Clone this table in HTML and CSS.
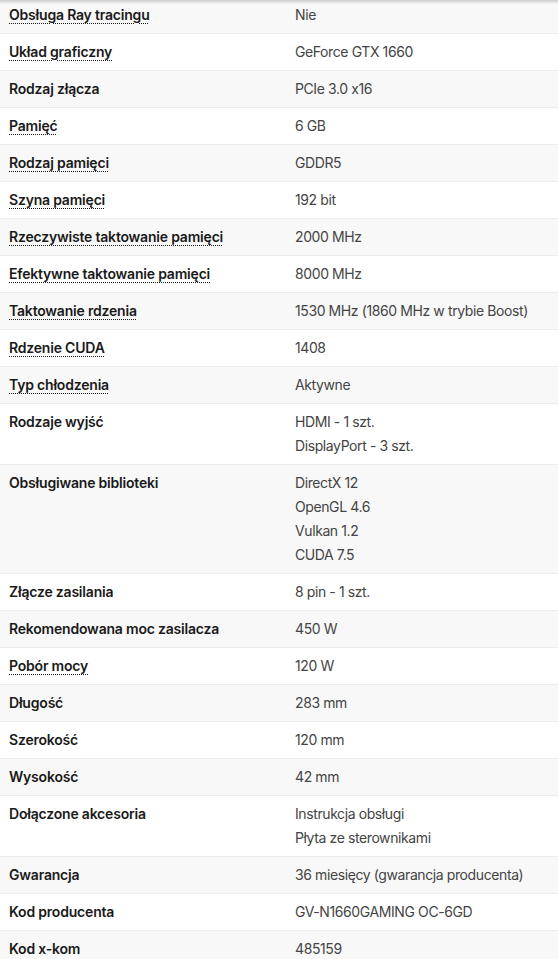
FILE: index.html
```html
<!DOCTYPE html>
<html lang="pl">
<head>
  <meta charset="UTF-8" />
  <meta name="viewport" content="width=device-width, initial-scale=1" />
  <title>Specyfikacja - GV-N1660GAMING OC-6GD</title>
  <link rel="stylesheet" href="styles.css">
</head>
<body>

<div class="top-shade"></div>

<div class="specs">
  <div class="row"><div class="label"><span class="hint">Obsługa Ray tracingu</span></div><div class="value"><div>Nie</div></div></div>
  <div class="row"><div class="label"><span class="hint">Układ graficzny</span></div><div class="value"><div>GeForce GTX 1660</div></div></div>
  <div class="row"><div class="label">Rodzaj złącza</div><div class="value"><div>PCIe 3.0 x16</div></div></div>
  <div class="row"><div class="label"><span class="hint">Pamięć</span></div><div class="value"><div>6 GB</div></div></div>
  <div class="row"><div class="label"><span class="hint">Rodzaj pamięci</span></div><div class="value"><div>GDDR5</div></div></div>
  <div class="row"><div class="label"><span class="hint">Szyna pamięci</span></div><div class="value"><div>192 bit</div></div></div>
  <div class="row"><div class="label"><span class="hint">Rzeczywiste taktowanie pamięci</span></div><div class="value"><div>2000 MHz</div></div></div>
  <div class="row"><div class="label"><span class="hint">Efektywne taktowanie pamięci</span></div><div class="value"><div>8000 MHz</div></div></div>
  <div class="row"><div class="label"><span class="hint">Taktowanie rdzenia</span></div><div class="value"><div>1530 MHz (1860 MHz w trybie Boost)</div></div></div>
  <div class="row"><div class="label"><span class="hint">Rdzenie CUDA</span></div><div class="value"><div>1408</div></div></div>
  <div class="row"><div class="label"><span class="hint">Typ chłodzenia</span></div><div class="value"><div>Aktywne</div></div></div>
  <div class="row"><div class="label">Rodzaje wyjść</div><div class="value"><div>HDMI - 1 szt.</div><div>DisplayPort - 3 szt.</div></div></div>
  <div class="row"><div class="label">Obsługiwane biblioteki</div><div class="value"><div>DirectX 12</div><div>OpenGL 4.6</div><div>Vulkan 1.2</div><div>CUDA 7.5</div></div></div>
  <div class="row"><div class="label">Złącze zasilania</div><div class="value"><div>8 pin - 1 szt.</div></div></div>
  <div class="row"><div class="label">Rekomendowana moc zasilacza</div><div class="value"><div>450 W</div></div></div>
  <div class="row"><div class="label"><span class="hint">Pobór mocy</span></div><div class="value"><div>120 W</div></div></div>
  <div class="row"><div class="label">Długość</div><div class="value"><div>283 mm</div></div></div>
  <div class="row"><div class="label">Szerokość</div><div class="value"><div>120 mm</div></div></div>
  <div class="row"><div class="label">Wysokość</div><div class="value"><div>42 mm</div></div></div>
  <div class="row"><div class="label">Dołączone akcesoria</div><div class="value"><div>Instrukcja obsługi</div><div>Płyta ze sterownikami</div></div></div>
  <div class="row"><div class="label">Gwarancja</div><div class="value"><div>36 miesięcy (gwarancja producenta)</div></div></div>
  <div class="row"><div class="label">Kod producenta</div><div class="value"><div>GV-N1660GAMING OC-6GD</div></div></div>
  <div class="row"><div class="label">Kod x-kom</div><div class="value"><div>485159</div></div></div>
</div>

</body>
</html>
```

FILE: styles.css
```css
body {
  margin: 0;
  font-family: Inter, 'Noto Sans', sans-serif;
  font-size: 14px;
  background-color: white;
  color: #1a1a1a;
}

.top-shade {
  position: fixed;
  top: 0;
  left: 0;
  width: 100%;
  height: 4px;
  background: linear-gradient(to bottom, rgba(0,0,0,0.18), rgba(0,0,0,0));
}

.specs {
  margin-top: -3px;
}

.row {
  display: flex;
  padding: 6px 9px;
  line-height: 24px;
  border-bottom: 1px solid #ececec;
}

.row:nth-child(odd) {
  background-color: #f8f8f8;
}

.label {
  width: 286px;
  flex-shrink: 0;
  font-weight: 600;
  letter-spacing: -0.2px;
}

.hint {
  text-decoration: underline dotted;
  text-underline-offset: 3px;
  text-decoration-thickness: 1px;
}

.value {
  color: #444;
  letter-spacing: -0.4px;
}
```
